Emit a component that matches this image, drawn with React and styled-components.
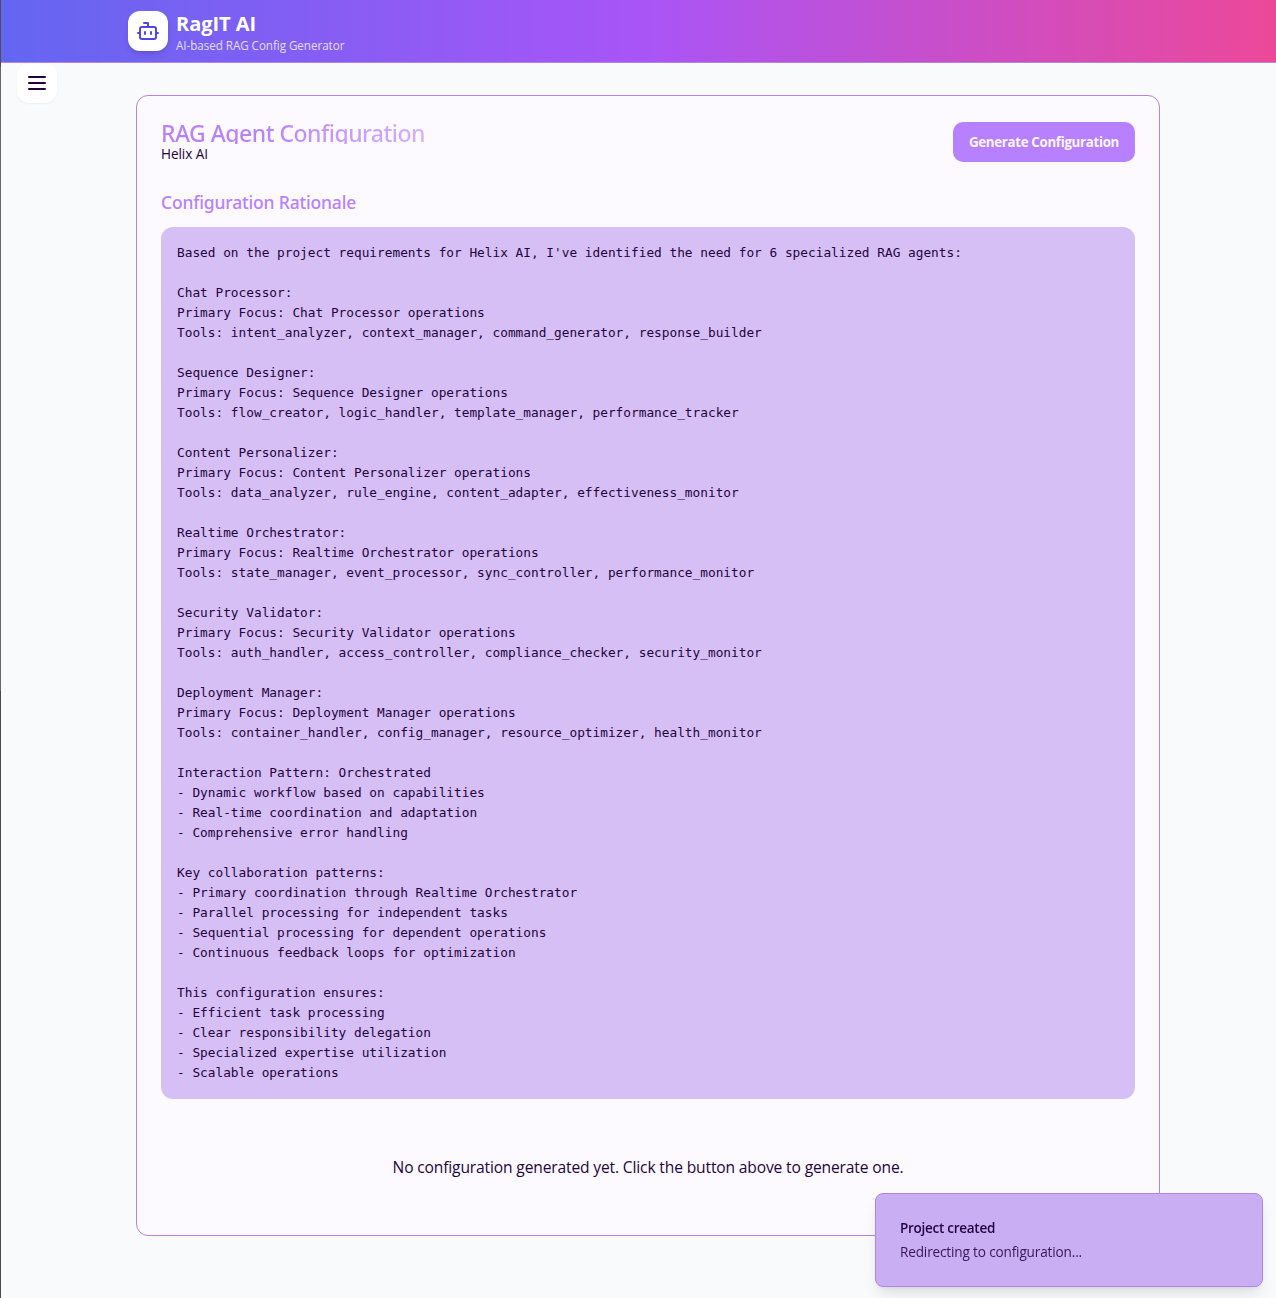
import React from "react";
import styled, { createGlobalStyle } from "styled-components";

const ink = "#240440";
const accent = "#b780ff";
const line = "#b184ea";

const Global = createGlobalStyle`
  *, *::before, *::after { box-sizing: border-box; }
  body {
    margin: 0;
    background: #f8fafc;
    color: ${ink};
    font-family: "Open Sans", "Noto Sans", sans-serif;
  }
  h1, h2, h3, p, pre { margin: 0; }
`;

const Page = styled.div`
  height: 1298px;
  padding-left: 1px;
  overflow: hidden;
  background:
    linear-gradient(#4f4f52 0 67px, #68686b 67px 691px, #4a4a4d 691px) left top / 1px 100% no-repeat,
    #f8fafc;
`;

const TopBar = styled.header`
  height: 63px;
  display: flex;
  align-items: center;
  gap: 8px;
  padding-left: 127px;
  border-bottom: 1px solid ${line};
  background: linear-gradient(90deg, #6366f1, #a855f7 50%, #ec4899) border-box;
`;

const Logo = styled.div`
  width: 40px;
  height: 40px;
  display: grid;
  place-items: center;
  border-radius: 12px;
  background: #fff;
  color: #4f46e5;
  box-shadow: 0 4px 6px -1px rgba(0, 0, 0, 0.1), 0 2px 4px -2px rgba(0, 0, 0, 0.1);
`;

const Brand = styled.div`
  display: flex;
  flex-direction: column;
`;

const BrandName = styled.h1`
  height: 28px;
  padding-top: 1px;
  font-size: 20px;
  font-weight: 700;
  line-height: 28px;
  letter-spacing: -0.05px;
  color: #fff;
`;

const Tagline = styled.p`
  font-size: 11.7px;
  line-height: 16px;
  letter-spacing: -0.07px;
  color: rgba(255, 255, 255, 0.8);
`;

const Body = styled.div`
  display: flex;
  align-items: flex-start;
`;

const MenuButton = styled.button`
  width: 40px;
  height: 40px;
  margin-left: 16px;
  padding: 0;
  display: grid;
  place-items: center;
  border: 0;
  border-radius: 12px;
  background: #fff;
  color: ${ink};
  box-shadow: 0 1px 2px rgba(0, 0, 0, 0.05);
`;

const Card = styled.main`
  width: 1024px;
  height: 1141px;
  margin: 32px 0 0 79px;
  padding: 24px;
  border: 1px solid ${line};
  border-radius: 12px;
  background: #fcfaff;
`;

const CardHeader = styled.div`
  display: flex;
  align-items: center;
  justify-content: space-between;
`;

const Title = styled.h2`
  width: fit-content;
  height: 24px;
  padding-top: 1px;
  font-family: "Noto Sans", sans-serif;
  font-size: 23px;
  font-weight: 550;
  line-height: 24px;
  letter-spacing: -0.51px;
  color: transparent;
  background: linear-gradient(90deg, ${accent} 0 35%, #d3b0ff);
  background-clip: text;
  -webkit-background-clip: text;
`;

const Subtitle = styled.p`
  font-size: 13.6px;
  line-height: 20px;
  letter-spacing: -0.08px;
`;

const PrimaryButton = styled.button`
  width: 182px;
  height: 40px;
  padding: 0;
  border: 0;
  border-radius: 10px;
  background: ${accent};
  color: #faf5ff;
  font: 700 13.3px "Open Sans", sans-serif;
  letter-spacing: -0.32px;
`;

const SectionTitle = styled.h3`
  margin-top: 24px;
  font-family: "Noto Sans", sans-serif;
  font-size: 17.5px;
  font-weight: 500;
  line-height: 28px;
  letter-spacing: -0.18px;
  color: ${accent};
`;

const Rationale = styled.pre`
  margin-top: 11px;
  padding: 16px;
  border-radius: 12px;
  background: #d6bff5;
  font: 12.79px/20px "DejaVu Sans Mono", monospace;
`;

const Empty = styled.p`
  padding: 56px 0 32px;
  text-align: center;
  font-size: 15.6px;
  line-height: 24px;
  letter-spacing: -0.15px;
`;

const Toast = styled.div`
  position: fixed;
  left: 875px;
  top: 1193px;
  width: 388px;
  height: 94px;
  padding: 24px;
  display: flex;
  flex-direction: column;
  gap: 4px;
  border: 1px solid ${line};
  border-radius: 8px;
  background: #c9aef3;
  box-shadow: 0 10px 15px -3px rgba(0, 0, 0, 0.1), 0 4px 6px -4px rgba(0, 0, 0, 0.1);
`;

const ToastTitle = styled.p`
  font-size: 13.5px;
  font-weight: 600;
  line-height: 20px;
  letter-spacing: -0.27px;
`;

const ToastText = styled.p`
  font-size: 13.6px;
  line-height: 20px;
  letter-spacing: -0.16px;
  opacity: 0.88;
`;

const BotIcon = () => (
  <svg width="24" height="24" viewBox="0 0 24 24" fill="none" stroke="currentColor" strokeWidth="2" strokeLinecap="round" strokeLinejoin="round">
    <path d="M12 8V4H8" />
    <rect width="16" height="12" x="4" y="8" rx="2" />
    <path d="M2 14h2M20 14h2M15 13v2M9 13v2" />
  </svg>
);

const MenuIcon = () => (
  <svg width="24" height="24" viewBox="0 0 24 24" fill="none" stroke="currentColor" strokeWidth="2" strokeLinecap="round">
    <path d="M4 6h16M4 12h16M4 18h16" />
  </svg>
);

const agents = [
  ["Chat Processor", "intent_analyzer, context_manager, command_generator, response_builder"],
  ["Sequence Designer", "flow_creator, logic_handler, template_manager, performance_tracker"],
  ["Content Personalizer", "data_analyzer, rule_engine, content_adapter, effectiveness_monitor"],
  ["Realtime Orchestrator", "state_manager, event_processor, sync_controller, performance_monitor"],
  ["Security Validator", "auth_handler, access_controller, compliance_checker, security_monitor"],
  ["Deployment Manager", "container_handler, config_manager, resource_optimizer, health_monitor"],
];

const rationale = [
  "Based on the project requirements for Helix AI, I've identified the need for 6 specialized RAG agents:",
  ...agents.map(([name, tools]) => `${name}:\nPrimary Focus: ${name} operations\nTools: ${tools}`),
  `Interaction Pattern: Orchestrated
- Dynamic workflow based on capabilities
- Real-time coordination and adaptation
- Comprehensive error handling`,
  `Key collaboration patterns:
- Primary coordination through Realtime Orchestrator
- Parallel processing for independent tasks
- Sequential processing for dependent operations
- Continuous feedback loops for optimization`,
  `This configuration ensures:
- Efficient task processing
- Clear responsibility delegation
- Specialized expertise utilization
- Scalable operations`,
].join("\n\n");

export default function App() {
  return (
    <Page>
      <Global />
      <TopBar>
        <Logo><BotIcon /></Logo>
        <Brand>
          <BrandName>RagIT AI</BrandName>
          <Tagline>AI-based RAG Config Generator</Tagline>
        </Brand>
      </TopBar>
      <Body>
        <MenuButton aria-label="Menu"><MenuIcon /></MenuButton>
        <Card>
          <CardHeader>
            <div>
              <Title>RAG Agent Configuration</Title>
              <Subtitle>Helix AI</Subtitle>
            </div>
            <PrimaryButton>Generate Configuration</PrimaryButton>
          </CardHeader>
          <SectionTitle>Configuration Rationale</SectionTitle>
          <Rationale>{rationale}</Rationale>
          <Empty>No configuration generated yet. Click the button above to generate one.</Empty>
        </Card>
      </Body>
      <Toast>
        <ToastTitle>Project created</ToastTitle>
        <ToastText>Redirecting to configuration...</ToastText>
      </Toast>
    </Page>
  );
}
